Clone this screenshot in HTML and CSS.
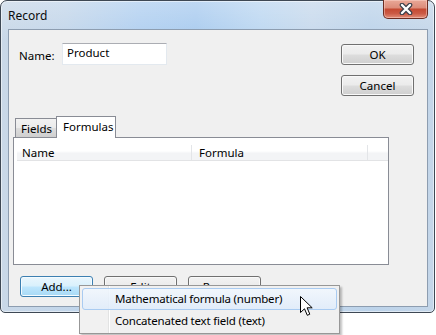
FILE: index.html
```html
<!DOCTYPE html>
<html lang="en">
  <head>
    <meta charset="UTF-8" />
    <meta name="viewport" content="width=device-width, initial-scale=1.0" />
    <title>Record</title>
    <link rel="stylesheet" href="styles.css">
  </head>
  <body>
    <div class="window">
      <div class="titlebar">
        <span class="title">Record</span>
        <div class="closebtn">
          <svg width="14" height="12" viewBox="0 0 14 12">
            <path d="M3 2 L11 10 M11 2 L3 10" stroke="#3b3f4a" stroke-width="4.6" stroke-linecap="round" fill="none" />
            <path d="M3 2 L11 10 M11 2 L3 10" stroke="#ffffff" stroke-width="2.4" stroke-linecap="round" fill="none" />
          </svg>
        </div>
      </div>
      <div class="client">
        <div class="top">
          <div class="namerow">
            <span class="label">Name:</span>
            <div class="textbox">Product</div>
          </div>
          <div class="btncol">
            <button class="btn">OK</button>
            <button class="btn">Cancel</button>
          </div>
        </div>
        <div class="tabs">
          <div class="tab">Fields</div>
          <div class="tab active">Formulas</div>
        </div>
        <div class="panel">
          <div class="listhead">
            <div class="col colname">Name</div>
            <div class="col colformula">Formula</div>
            <div class="col colfill"></div>
          </div>
        </div>
        <div class="bottom">
          <button class="btn hot">Add...</button>
          <button class="btn">Edit</button>
          <button class="btn">Remove</button>
        </div>
      </div>
    </div>

    <div class="menu">
      <div class="menuitem selected">Mathematical formula (number)</div>
      <div class="menuitem">Concatenated text field (text)</div>
    </div>

    <svg class="cursor" width="14" height="21" viewBox="0 0 14 21">
      <path d="M0.5 0.5 L0.5 16.5 L4.5 12.8 L7.3 19.3 L9.8 18.2 L7.1 11.8 L12.2 11.8 Z" fill="#ffffff" stroke="#000000" stroke-width="1" stroke-linejoin="miter" />
    </svg>
  </body>
</html>
```

FILE: styles.css
```css
* {
  box-sizing: border-box;
}
body {
  margin: 0;
  background-color: #ffffff;
  font-family: "Noto Sans", "Open Sans", sans-serif;
  font-size: 11.5px;
  color: #000000;
  width: 436px;
  height: 335px;
  overflow: hidden;
}
.window {
  width: 435px;
  height: 313px;
  border: 1px solid #3e4854;
  border-radius: 7px 7px 5px 5px;
  padding: 0 6px 5px 7px;
  display: flex;
  flex-direction: column;
  background: linear-gradient(180deg, rgba(255, 255, 255, 0.25), rgba(255, 255, 255, 0) 40px),
    linear-gradient(90deg, #c9d8e8 0%, #c3d6ea 15%, #b0cff0 32%, #a9cbef 45%, #bcd7f1 60%, #c7d9ec 72%, #bcd3ea 85%, #c4d6e9 100%);
  box-shadow: inset 0 0 0 1px rgba(255, 255, 255, 0.5);
}
.titlebar {
  height: 28px;
  display: flex;
  justify-content: space-between;
  align-items: flex-start;
}
.title {
  padding-top: 6px;
  font-size: 12px;
  color: #0b0b0b;
}
.closebtn {
  width: 45px;
  height: 19px;
  margin-top: -1px;
  border: 1px solid #6b2c22;
  border-top: none;
  border-radius: 0 0 5px 5px;
  display: flex;
  align-items: center;
  justify-content: center;
  background: linear-gradient(180deg, #e9a898 0%, #dd8d7b 42%, #c54a33 52%, #cb5a45 75%, #e28e79 100%);
  box-shadow: inset 0 0 0 1px rgba(255, 220, 210, 0.45);
}
.client {
  flex: 1;
  background-color: #f0f0f0;
  border: 1px solid #8d9db0;
  padding: 13px 13px 0 4px;
  display: flex;
  flex-direction: column;
}
.top {
  height: 73px;
  display: flex;
  justify-content: space-between;
  align-items: flex-start;
  padding-left: 6px;
}
.namerow {
  display: flex;
  align-items: center;
}
.label {
  width: 43px;
  padding-top: 2px;
}
.textbox {
  width: 105px;
  height: 22px;
  background-color: #ffffff;
  border: 1px solid #e3e9ef;
  border-top-color: #abadb3;
  padding: 2px 4px;
  line-height: 14px;
}
.btncol {
  display: flex;
  flex-direction: column;
  gap: 10px;
  padding-top: 1px;
}
.btn {
  width: 73px;
  height: 21px;
  font-family: inherit;
  font-size: inherit;
  color: #000000;
  border: 1px solid #707070;
  border-radius: 3px;
  padding: 0;
  background: linear-gradient(180deg, #f2f2f2 0%, #ebebeb 48%, #dddddd 52%, #cfcfcf 100%);
  box-shadow: inset 0 0 0 1px #f9f9f9;
}
.btn.hot {
  border-color: #3c7fb1;
  background: linear-gradient(180deg, #eaf6fd 0%, #d9f0fc 48%, #bee6fd 52%, #a7d9f5 100%);
  box-shadow: inset 0 0 0 1px #f4fbff;
}
.tabs {
  display: flex;
  align-items: flex-end;
  height: 21px;
  padding-left: 2px;
  position: relative;
  z-index: 1;
}
.tab {
  height: 19px;
  padding: 2px 0 0 5px;
  width: 41px;
  border: 1px solid #898c95;
  border-bottom: none;
  border-right: none;
  background: linear-gradient(180deg, #f2f2f2 0%, #ebebeb 48%, #dddddd 52%, #cfcfcf 100%);
}
.tab.active {
  width: 60px;
  height: 22px;
  margin-bottom: -1px;
  padding: 2px 0 0 6px;
  border-right: 1px solid #898c95;
  background: #ffffff;
}
.panel {
  width: 376px;
  height: 128px;
  background-color: #ffffff;
  border: 1px solid #898c95;
  padding: 7px 0 0 3px;
}
.listhead {
  display: flex;
  height: 16px;
  border-bottom: 1px solid #e2e3e5;
  background: linear-gradient(180deg, #ffffff 0%, #ffffff 40%, #f3f4f6 55%, #f3f4f6 100%);
}
.col {
  padding: 0 0 0 5px;
  line-height: 15px;
  border-right: 1px solid #e3e5e8;
}
.colname {
  width: 175px;
}
.colformula {
  width: 176px;
  padding-left: 7px;
}
.colfill {
  flex: 1;
  border-right: none;
}
.bottom {
  display: flex;
  gap: 11px;
  margin-top: 11px;
  padding-left: 7px;
}
.menu {
  position: absolute;
  left: 79px;
  top: 285px;
  width: 261px;
  height: 49px;
  border: 1px solid #979797;
  padding: 2px;
  background: linear-gradient(90deg, #f1f1f1 0px, #f1f1f1 28px, #e2e3e3 28px, #e2e3e3 29px, #ffffff 29px, #ffffff 30px, #f0f0f0 30px);
  box-shadow: 2px 2px 2px rgba(0, 0, 0, 0.25);
}
.menuitem {
  height: 22px;
  line-height: 20px;
  padding-left: 32px;
  letter-spacing: -0.2px;
  border: 1px solid transparent;
  border-radius: 3px;
}
.menuitem.selected {
  border-color: #a9cbf1;
  background: linear-gradient(180deg, rgba(241, 247, 254, 0.85), rgba(223, 236, 251, 0.85));
}
.cursor {
  position: absolute;
  left: 300px;
  top: 296px;
}
```
